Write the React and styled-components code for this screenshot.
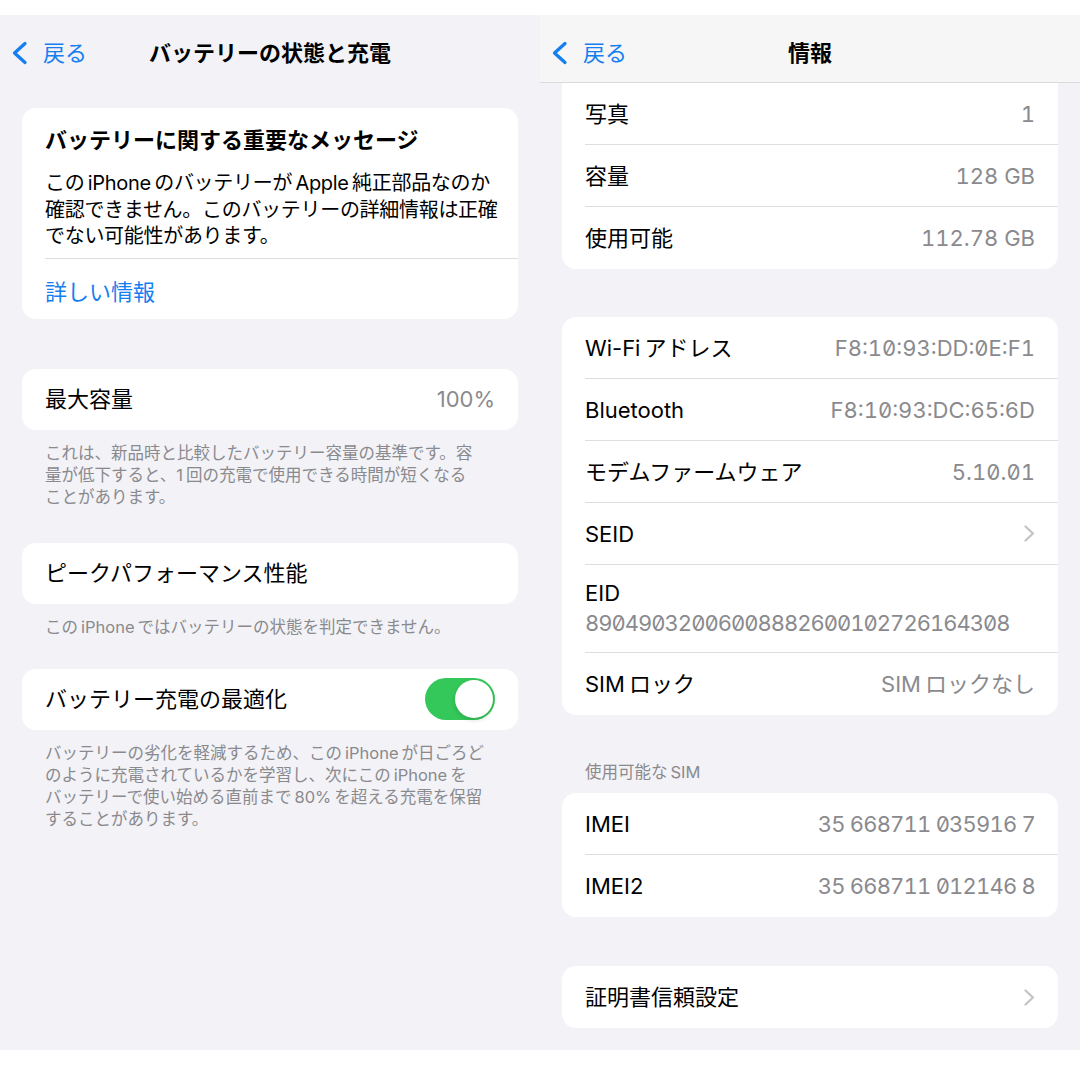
import React from "react";
import styled, { createGlobalStyle } from "styled-components";

const GlobalStyle = createGlobalStyle`
  html, body {
    margin: 0;
    padding: 0;
    background: #ffffff;
  }
  body {
    font-family: "Inter", "Noto Sans CJK JP", sans-serif;
    -webkit-font-smoothing: antialiased;
  }
`;

const BLUE = "#157ef0";
const GRAY = "#8a8a8e";
const SEP = "#dedee0";

// Page and phone screens
const Shots = styled.div`
  display: flex;
  width: 1080px;
  padding: 15px 0 30px;
  background: #ffffff;
`;

const Screen = styled.div`
  width: 540px;
  height: 1035px;
  background: #f2f2f7;
  display: flex;
  flex-direction: column;
  overflow: hidden;
`;

const NavBar = styled.div`
  flex: none;
  height: 68px;
  box-sizing: border-box;
  padding-top: 8px;
  display: grid;
  grid-template-columns: 1fr auto 1fr;
  align-items: center;
  background: ${(p) => (p.$bar ? "#f6f6f7" : "transparent")};
  border-bottom: 1px solid ${(p) => (p.$bar ? "#dadadc" : "transparent")};
`;

const BackButton = styled.div`
  display: flex;
  align-items: center;
  gap: 15px;
  padding-left: 11px;
  color: ${BLUE};
  font-size: 22px;
  line-height: 30px;
`;

const NavTitle = styled.div`
  font-size: 22px;
  font-weight: 700;
  line-height: 30px;
  color: #000;
`;

const Content = styled.div`
  display: flex;
  flex-direction: column;
  padding: 0 22px;
`;

// Grouped cards and rows
const Card = styled.div`
  background: #ffffff;
  border-radius: ${(p) => (p.$flatTop ? "0 0 14px 14px" : "14px")};
  margin-top: ${(p) => p.$mt || 0}px;
  overflow: hidden;
`;

const Row = styled.div`
  box-sizing: border-box;
  height: ${(p) => p.$h || 62}px;
  margin-left: 23px;
  padding-right: 23px;
  display: flex;
  align-items: center;
  justify-content: space-between;
  border-bottom: 1px solid ${SEP};

  &:last-child {
    border-bottom: none;
  }
`;

const StackRow = styled(Row)`
  flex-direction: column;
  align-items: flex-start;
  justify-content: flex-start;
  padding-top: 14px;
  gap: 2px;
`;

const Label = styled.span`
  font-size: 22px;
  line-height: 28px;
  color: #000;
  white-space: nowrap;
`;

const Value = styled.span`
  font-size: 22px;
  line-height: 28px;
  color: ${GRAY};
  white-space: nowrap;
  letter-spacing: ${(p) => p.$track || 0}px;
  font-feature-settings: ${(p) => (p.$zero ? '"zero" 1, "tnum" 1' : "normal")};
`;

const Footer = styled.div`
  padding: 12px 0 0 23px;
  font-size: 16.5px;
  line-height: 22px;
  color: ${GRAY};
  white-space: nowrap;
`;

const SectionHeader = styled.div`
  margin: ${(p) => p.$mt || 0}px 0 11px;
  padding-left: 23px;
  font-size: 16.5px;
  line-height: 20px;
  color: ${GRAY};
`;

// Message card
const MsgBlock = styled.div`
  padding: 17px 23px 8px;
`;

const MsgTitle = styled.div`
  font-size: 22px;
  font-weight: 700;
  line-height: 30px;
  color: #000;
`;

const MsgText = styled.div`
  margin-top: 15px;
  font-size: 20px;
  letter-spacing: -0.3px;
  line-height: 26.5px;
  color: #000;
  white-space: nowrap;
`;

const LinkRow = styled.div`
  box-sizing: border-box;
  height: 61px;
  margin-left: 23px;
  padding-top: 3px;
  display: flex;
  align-items: center;
  border-top: 1px solid ${SEP};
  color: ${BLUE};
  font-size: 22px;
`;

// Switch
const Toggle = styled.div`
  box-sizing: border-box;
  width: 70px;
  height: 42px;
  padding: 2px;
  border-radius: 21px;
  background: #34c759;
  display: flex;
  justify-content: ${(p) => (p.$on ? "flex-end" : "flex-start")};
`;

const Knob = styled.span`
  width: 38px;
  height: 38px;
  border-radius: 50%;
  background: #ffffff;
  box-shadow: 0 2px 5px rgba(0, 0, 0, 0.15);
`;

const BackChevron = () => (
  <svg width="17" height="24" viewBox="0 0 17 24">
    <path
      d="M14 2.5 L3.5 12 L14 21.5"
      fill="none"
      stroke={BLUE}
      strokeWidth="3.3"
      strokeLinecap="round"
      strokeLinejoin="round"
    />
  </svg>
);

const Chevron = () => (
  <svg width="11" height="17" viewBox="0 0 11 17">
    <path
      d="M1.5 1.5 L9 8.5 L1.5 15.5"
      fill="none"
      stroke="#c4c4c7"
      strokeWidth="2.2"
      strokeLinecap="round"
      strokeLinejoin="round"
    />
  </svg>
);

const Nav = ({ title, bar }) => (
  <NavBar $bar={bar}>
    <BackButton>
      <BackChevron />
      <span>戻る</span>
    </BackButton>
    <NavTitle>{title}</NavTitle>
    <span />
  </NavBar>
);

const Lines = ({ lines }) =>
  lines.map((line) => <div key={line}>{line}</div>);

const T = "\u2009";

const BatteryScreen = () => (
  <Screen>
    <Nav title="バッテリーの状態と充電" />
    <Content>
      <Card $mt={25}>
        <MsgBlock>
          <MsgTitle>バッテリーに関する重要なメッセージ</MsgTitle>
          <MsgText>
            <Lines
              lines={[
                `この${T}iPhone${T}のバッテリーが${T}Apple${T}純正部品なのか`,
                "確認できません。このバッテリーの詳細情報は正確",
                "でない可能性があります。",
              ]}
            />
          </MsgText>
        </MsgBlock>
        <LinkRow>詳しい情報</LinkRow>
      </Card>

      <Card $mt={50}>
        <Row $h={61}>
          <Label>最大容量</Label>
          <Value>100%</Value>
        </Row>
      </Card>
      <Footer>
        <Lines
          lines={[
            "これは、新品時と比較したバッテリー容量の基準です。容",
            `量が低下すると、1${T}回の充電で使用できる時間が短くなる`,
            "ことがあります。",
          ]}
        />
      </Footer>

      <Card $mt={35}>
        <Row $h={61}>
          <Label>ピークパフォーマンス性能</Label>
        </Row>
      </Card>
      <Footer>{`この${T}iPhone${T}ではバッテリーの状態を判定できません。`}</Footer>

      <Card $mt={31}>
        <Row $h={61}>
          <Label>バッテリー充電の最適化</Label>
          <Toggle $on>
            <Knob />
          </Toggle>
        </Row>
      </Card>
      <Footer>
        <Lines
          lines={[
            `バッテリーの劣化を軽減するため、この${T}iPhone${T}が日ごろど`,
            `のように充電されているかを学習し、次にこの${T}iPhone${T}を`,
            `バッテリーで使い始める直前まで${T}80%${T}を超える充電を保留`,
            "することがあります。",
          ]}
        />
      </Footer>
    </Content>
  </Screen>
);

const InfoScreen = () => (
  <Screen>
    <Nav title="情報" bar />
    <Content>
      <Card $flatTop>
        <Row>
          <Label>写真</Label>
          <Value $zero>1</Value>
        </Row>
        <Row>
          <Label>容量</Label>
          <Value $zero>128 GB</Value>
        </Row>
        <Row>
          <Label>使用可能</Label>
          <Value $zero>112.78 GB</Value>
        </Row>
      </Card>

      <Card $mt={48}>
        <Row>
          <Label>{`Wi-Fi${T}アドレス`}</Label>
          <Value $zero>F8:10:93:DD:0E:F1</Value>
        </Row>
        <Row>
          <Label>Bluetooth</Label>
          <Value $zero>F8:10:93:DC:65:6D</Value>
        </Row>
        <Row>
          <Label>モデムファームウェア</Label>
          <Value $zero>5.10.01</Value>
        </Row>
        <Row>
          <Label>SEID</Label>
          <Chevron />
        </Row>
        <StackRow $h={88}>
          <Label>EID</Label>
          <Value $zero $track={-1}>
            89049032006008882600102726164308
          </Value>
        </StackRow>
        <Row>
          <Label>{`SIM${T}ロック`}</Label>
          <Value>{`SIM${T}ロックなし`}</Value>
        </Row>
      </Card>

      <SectionHeader $mt={47}>{`使用可能な${T}SIM`}</SectionHeader>
      <Card>
        <Row>
          <Label>IMEI</Label>
          <Value $zero $track={-0.8}>
            35 668711 035916 7
          </Value>
        </Row>
        <Row>
          <Label>IMEI2</Label>
          <Value $zero $track={-0.8}>
            35 668711 012146 8
          </Value>
        </Row>
      </Card>

      <Card $mt={49}>
        <Row>
          <Label>証明書信頼設定</Label>
          <Chevron />
        </Row>
      </Card>
    </Content>
  </Screen>
);

export default function App() {
  return (
    <>
      <GlobalStyle />
      <Shots>
        <BatteryScreen />
        <InfoScreen />
      </Shots>
    </>
  );
}
